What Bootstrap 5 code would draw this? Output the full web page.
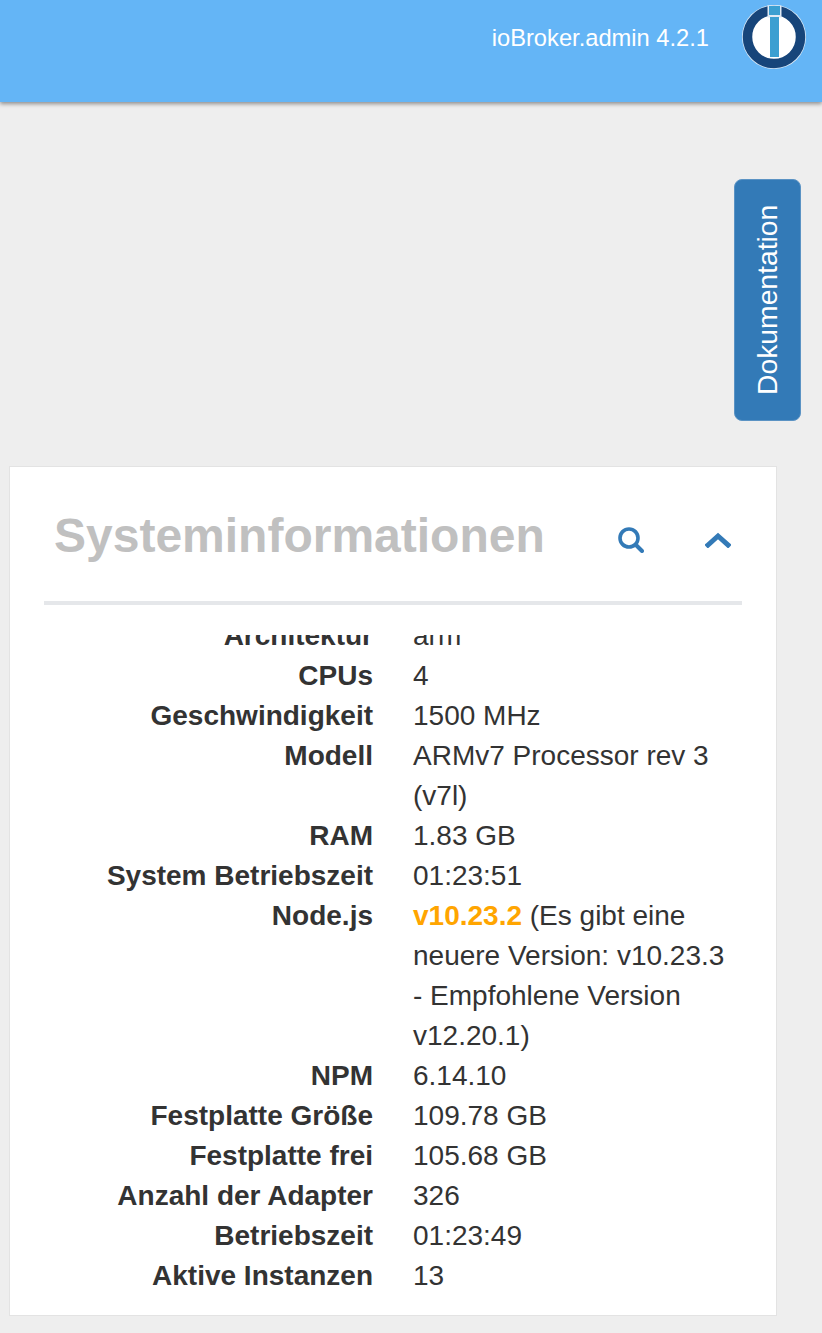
<!DOCTYPE html>
<html lang="de">
<head>
<meta charset="utf-8">
<title>ioBroker.admin</title>
<link rel="stylesheet" href="https://cdn.jsdelivr.net/npm/bootstrap@5.3.0/dist/css/bootstrap.min.css">
<style>
html,body{height:100%;}
body{background:#eee;font-family:"Liberation Sans",Arial,sans-serif;color:#333;overflow:hidden;}
.top-bar{height:102px;background:#64b5f6;box-shadow:0 2px 4px rgba(0,0,0,.4);padding:5px 16px 0 0;gap:33px;}
.top-title{color:#fff;font-size:23.7px;line-height:66px;}
.doc-wrap{height:364px;padding:77px 21px 0 0;}
.doc-btn{writing-mode:vertical-rl;transform:rotate(180deg);width:67px;height:242px;background:#337ab7;border:1px solid #5b93c4;border-radius:8px;color:#fff;font-size:28.3px;line-height:1;padding:0;}
.info-panel{width:768px;height:850px;margin-left:9px;background:#fff;border:1px solid #e3e3e3;padding:0 34px;}
.panel-head{height:138px;border-bottom:4px solid #e5e7ea;padding:0 10px;}
.panel-title{font-size:48px;font-weight:700;color:#c0c0c0;margin:4px 0 0;line-height:1;}
.panel-icons{gap:61px;margin:12px 1px 0 0;}
.info-scroll{height:661px;margin-top:30px;overflow:hidden;justify-content:flex-end;}
.info-row{--bs-gutter-x:40px;flex-shrink:0;font-size:28px;line-height:40px;}
.info-key{font-weight:700;text-align:right;}
.warn-ver{color:#ffa500;font-weight:700;}
</style>
</head>
<body>
<header class="top-bar d-flex align-items-start justify-content-end">
  <span class="top-title">ioBroker.admin 4.2.1</span>
  <svg width="64" height="64" viewBox="0 0 64 64" aria-label="ioBroker">
    <circle cx="32" cy="32" r="32" fill="#dfeaf5"/>
    <circle cx="32" cy="32" r="26.5" fill="#fff" stroke="#17457a" stroke-width="9.5"/>
    <rect x="25.5" y="0.5" width="14" height="12" fill="#dfeaf5"/>
    <rect x="27" y="1" width="11" height="9" fill="#3b9fd1"/>
    <rect x="28" y="12" width="9" height="40" fill="#3b9fd1"/>
  </svg>
</header>
<div class="doc-wrap d-flex justify-content-end align-items-start">
  <button type="button" class="btn doc-btn">Dokumentation</button>
</div>
<section class="info-panel">
  <div class="panel-head d-flex align-items-center justify-content-between">
    <h2 class="panel-title">Systeminformationen</h2>
    <div class="panel-icons d-flex align-items-center">
      <svg width="26" height="26" viewBox="0 0 26 26" fill="none" stroke="#337ab7" stroke-linecap="round"><circle cx="11" cy="11" r="9" stroke-width="3.6"/><path d="M18 18l6 6" stroke-width="4"/></svg>
      <svg width="26" height="16" viewBox="0 0 26 16" fill="none" stroke="#337ab7" stroke-width="5" stroke-linecap="square"><path d="M3 13L13 4l10 9"/></svg>
    </div>
  </div>
  <div class="info-scroll d-flex flex-column">
    <div class="row info-row"><div class="col-6 info-key">Architektur</div><div class="col-6">arm</div></div>
    <div class="row info-row"><div class="col-6 info-key">CPUs</div><div class="col-6">4</div></div>
    <div class="row info-row"><div class="col-6 info-key">Geschwindigkeit</div><div class="col-6">1500 MHz</div></div>
    <div class="row info-row"><div class="col-6 info-key">Modell</div><div class="col-6">ARMv7 Processor rev 3 (v7l)</div></div>
    <div class="row info-row"><div class="col-6 info-key">RAM</div><div class="col-6">1.83 GB</div></div>
    <div class="row info-row"><div class="col-6 info-key">System Betriebszeit</div><div class="col-6">01:23:51</div></div>
    <div class="row info-row"><div class="col-6 info-key">Node.js</div><div class="col-6"><span class="warn-ver">v10.23.2</span> (Es gibt eine neuere Version: v10.23.3 <span class="text-nowrap">- Empfohlene Version</span> v12.20.1)</div></div>
    <div class="row info-row"><div class="col-6 info-key">NPM</div><div class="col-6">6.14.10</div></div>
    <div class="row info-row"><div class="col-6 info-key">Festplatte Größe</div><div class="col-6">109.78 GB</div></div>
    <div class="row info-row"><div class="col-6 info-key">Festplatte frei</div><div class="col-6">105.68 GB</div></div>
    <div class="row info-row"><div class="col-6 info-key">Anzahl der Adapter</div><div class="col-6">326</div></div>
    <div class="row info-row"><div class="col-6 info-key">Betriebszeit</div><div class="col-6">01:23:49</div></div>
    <div class="row info-row"><div class="col-6 info-key">Aktive Instanzen</div><div class="col-6">13</div></div>
  </div>
</section>
</body>
</html>
